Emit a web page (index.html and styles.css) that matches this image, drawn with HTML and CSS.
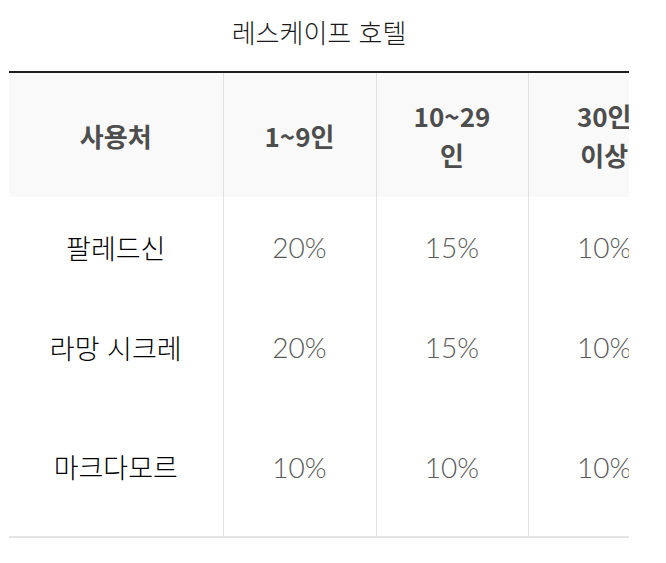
FILE: index.html
```html
<!DOCTYPE html>
<html lang="ko">
<head>
<meta charset="utf-8">
<title>레스케이프 호텔</title>
<link rel="stylesheet" href="styles.css">
</head>
<body>
<div class="page">
  <h2 class="title">레스케이프 호텔</h2>
  <div class="table-wrap">
    <table class="rates">
      <colgroup>
        <col class="c1"><col class="c2"><col class="c3"><col class="c4">
      </colgroup>
      <thead>
        <tr>
          <th>사용처</th>
          <th>1~9인</th>
          <th>10~29<br>인</th>
          <th>30인<br>이상</th>
        </tr>
      </thead>
      <tbody>
        <tr class="r1">
          <td class="name">팔레드신</td>
          <td class="pct">20%</td>
          <td class="pct">15%</td>
          <td class="pct">10%</td>
        </tr>
        <tr class="r2">
          <td class="name">라망 시크레</td>
          <td class="pct">20%</td>
          <td class="pct">15%</td>
          <td class="pct">10%</td>
        </tr>
        <tr class="r3">
          <td class="name">마크다모르</td>
          <td class="pct">10%</td>
          <td class="pct">10%</td>
          <td class="pct">10%</td>
        </tr>
      </tbody>
    </table>
  </div>
</div>
</body>
</html>
```

FILE: styles.css
```css
html, body {
  margin: 0;
  padding: 0;
  background: #ffffff;
}

.page {
  width: 620px;
  padding-left: 9px;
  font-family: "Noto Sans CJK KR", "Noto Sans", sans-serif;
}

.title {
  margin: 13px 0 0 0;
  height: 58px;
  line-height: 38px;
  font-size: 26px;
  font-weight: 300;
  color: #1a1a1a;
  text-align: center;
}

.table-wrap {
  width: 620px;
  overflow: hidden;
}

.rates {
  table-layout: fixed;
  width: 671px;
  border-collapse: collapse;
  border-top: 2px solid #1e1e1e;
  border-bottom: 2px solid #e4e4e4;
}

.c1 { width: 214px; }
.c2 { width: 153px; }
.c3 { width: 152px; }
.c4 { width: 152px; }

.rates th,
.rates td {
  padding: 0 20px;
  text-align: center;
  vertical-align: middle;
  border-left: 1px solid #e0e0e0;
}

.rates th:first-child,
.rates td:first-child {
  border-left: none;
}

.rates thead tr {
  height: 125px;
  background: #f9f9f9;
}

.rates th {
  font-size: 26px;
  font-weight: 700;
  line-height: 39px;
  color: #4d4d4d;
}

.r1, .r2 { height: 100px; }
.r3 { height: 140px; }

.name {
  font-size: 27px;
  font-weight: 300;
  color: #000000;
}

.pct {
  font-family: "Lato", "Noto Sans", sans-serif;
  font-size: 28px;
  font-weight: 300;
  color: #5a5a5a;
}
```
